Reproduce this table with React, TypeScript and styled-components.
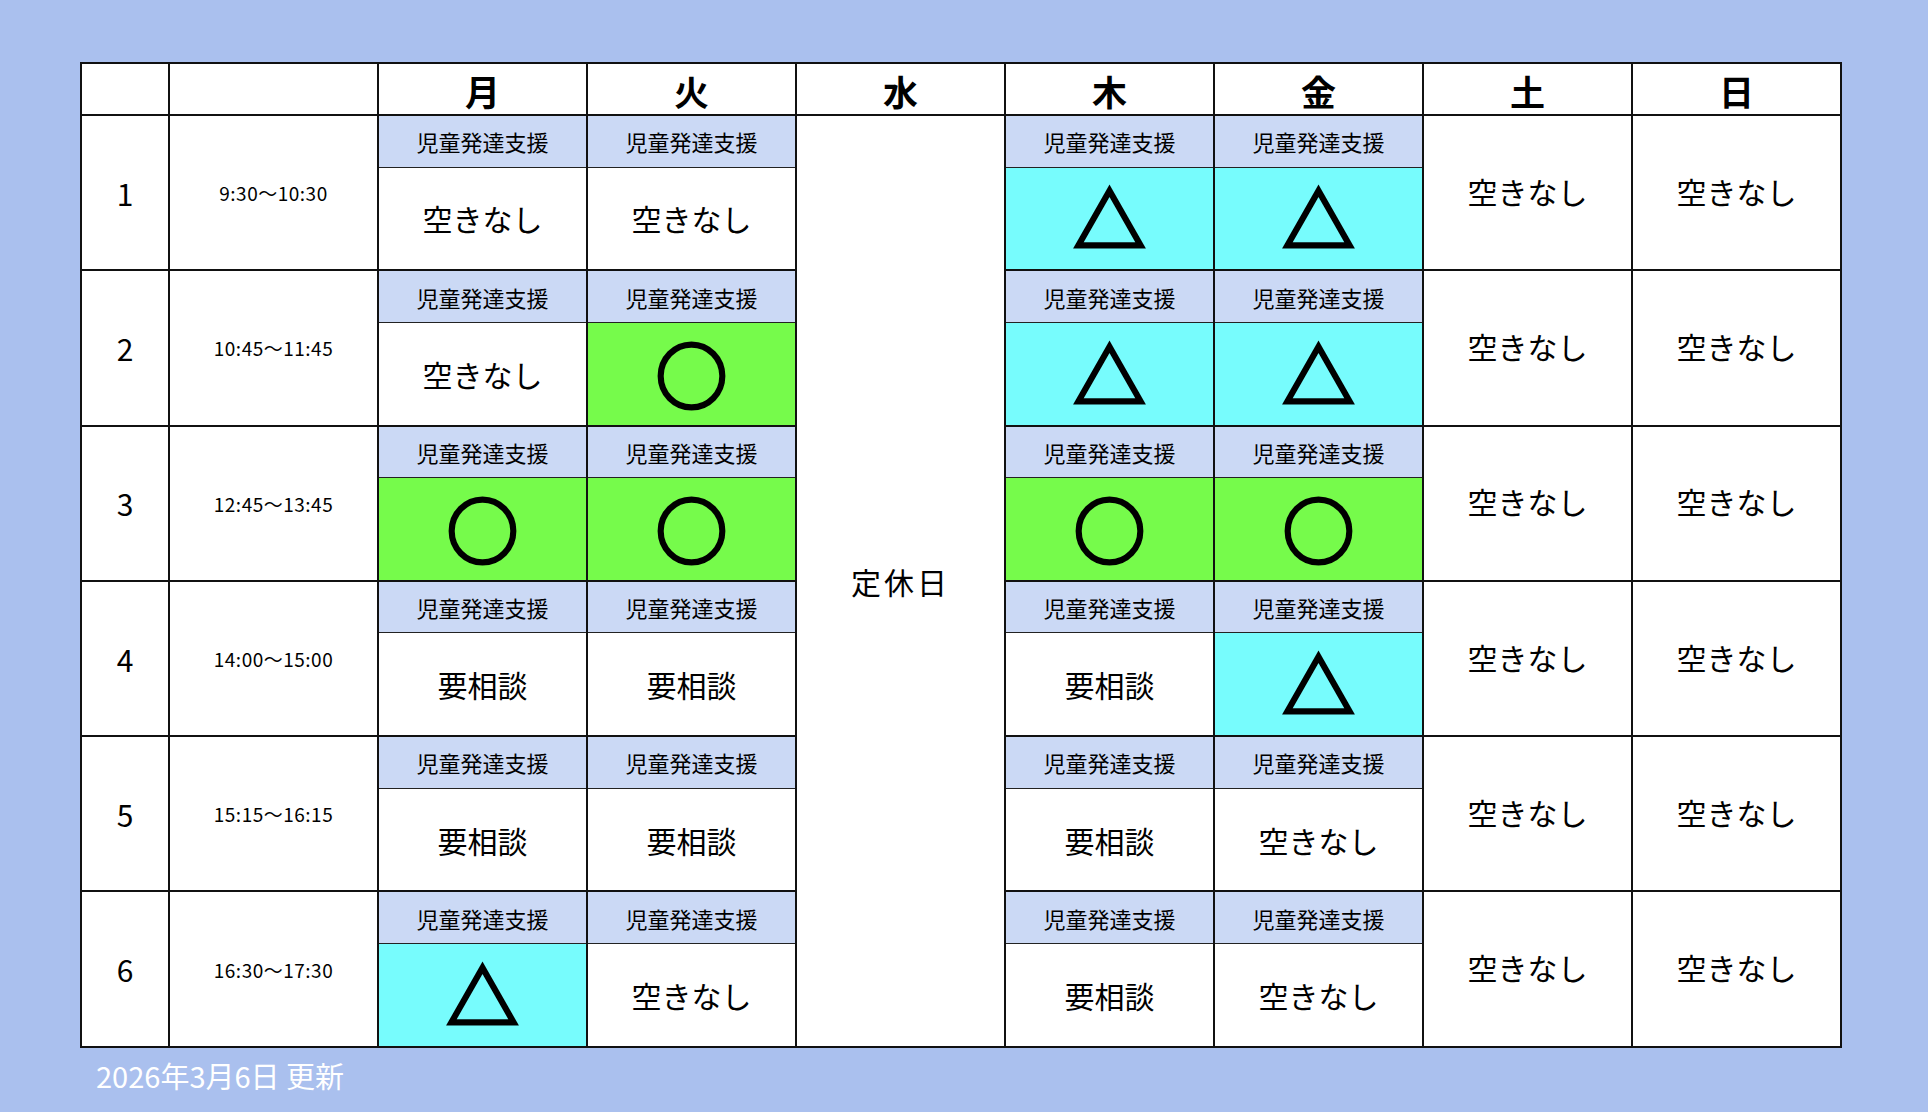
import React from 'react';
import styled, { createGlobalStyle } from 'styled-components';

const GlobalStyle = createGlobalStyle`
  html, body {
    margin: 0;
    overflow: hidden;
  }
  body {
    background: #aac0ee;
    font-family: "Noto Sans CJK JP", "Noto Sans", sans-serif;
  }
`;

const Page = styled.div`
  box-sizing: border-box;
  height: 1112px;
  padding: 62px 0 0 80px;
`;

const Table = styled.table`
  border-collapse: collapse;
  table-layout: fixed;
  background: #fff;
  border: 2px solid #111;
  color: #000;
`;

const HeadRow = styled.tr`
  height: 52px;
`;

const LabelRow = styled.tr`
  height: 52px;
`;

const ContentRow = styled.tr`
  height: 103.3px;
`;

const HeadCell = styled.th`
  border: 2px solid #111;
  padding: 2px 0 0;
  font-size: 35px;
  font-weight: 700;
  line-height: 1;
  text-align: center;
  vertical-align: middle;
`;

const NumCell = styled.td`
  border: 2px solid #111;
  padding: 0;
  font-size: 30px;
  text-align: center;
  vertical-align: middle;
`;

const TimeCell = styled.td`
  border: 2px solid #111;
  padding: 0;
  font-size: 19px;
  letter-spacing: 0.5px;
  text-align: center;
  vertical-align: middle;
`;

const LabelCell = styled.td`
  border-left: 2px solid #111;
  border-right: 2px solid #111;
  border-top: 2px solid #111;
  border-bottom: 1px solid #222;
  padding: 0;
  background: #cbd9f5;
  font-size: 22px;
  text-align: center;
  vertical-align: middle;
  white-space: nowrap;
`;

const colors = {
  ok: '#76fb4b',
  few: '#77fcfd',
  none: '#ffffff',
};

const SlotCell = styled.td<{ $tone: keyof typeof colors }>`
  border-left: 2px solid #111;
  border-right: 2px solid #111;
  border-bottom: 2px solid #111;
  padding: 0;
  background: ${({ $tone }) => colors[$tone]};
  font-size: 30px;
  text-align: center;
  vertical-align: middle;
  white-space: nowrap;
`;

const ClosedCell = styled.td`
  border: 2px solid #111;
  padding: 0;
  font-size: 30px;
  letter-spacing: 3px;
  text-align: center;
  vertical-align: middle;
`;

const OffCell = styled.td`
  border: 2px solid #111;
  padding: 0 0 4px;
  font-size: 30px;
  text-align: center;
  vertical-align: middle;
`;

const Mark = styled.span`
  display: inline-block;
  font-size: 72px;
  font-weight: 700;
  line-height: 1;
  -webkit-text-stroke: 3px #000;
`;

const Updated = styled.div`
  margin: 10px 0 0 16px;
  color: #ffffff;
  font-size: 29px;
  line-height: 1.2;
`;

const days = ['月', '火', '水', '木', '金', '土', '日'];

const slots = [
  { time: '9:30〜10:30', mon: '空きなし', tue: '空きなし', thu: '△', fri: '△' },
  { time: '10:45〜11:45', mon: '空きなし', tue: '○', thu: '△', fri: '△' },
  { time: '12:45〜13:45', mon: '○', tue: '○', thu: '○', fri: '○' },
  { time: '14:00〜15:00', mon: '要相談', tue: '要相談', thu: '要相談', fri: '△' },
  { time: '15:15〜16:15', mon: '要相談', tue: '要相談', thu: '要相談', fri: '空きなし' },
  { time: '16:30〜17:30', mon: '△', tue: '空きなし', thu: '要相談', fri: '空きなし' },
];

const Slot = ({ value }: { value: string }) => {
  if (value === '○') return <SlotCell $tone="ok"><Mark>○</Mark></SlotCell>;
  if (value === '△') return <SlotCell $tone="few"><Mark>△</Mark></SlotCell>;
  return <SlotCell $tone="none">{value}</SlotCell>;
};

const App = () => {
  return (
    <>
      <GlobalStyle />
      <Page>
        <Table>
          <colgroup>
            <col style={{ width: 88 }} />
            <col style={{ width: 209 }} />
            {days.map((d) => (
              <col key={d} style={{ width: 209 }} />
            ))}
          </colgroup>
          <thead>
            <HeadRow>
              <HeadCell />
              <HeadCell />
              {days.map((d) => (
                <HeadCell key={d}>{d}</HeadCell>
              ))}
            </HeadRow>
          </thead>
          <tbody>
            {slots.map((s, i) => (
              <React.Fragment key={s.time}>
                <LabelRow>
                  <NumCell rowSpan={2}>{i + 1}</NumCell>
                  <TimeCell rowSpan={2}>{s.time}</TimeCell>
                  <LabelCell>児童発達支援</LabelCell>
                  <LabelCell>児童発達支援</LabelCell>
                  {i === 0 && <ClosedCell rowSpan={12}>定休日</ClosedCell>}
                  <LabelCell>児童発達支援</LabelCell>
                  <LabelCell>児童発達支援</LabelCell>
                  <OffCell rowSpan={2}>空きなし</OffCell>
                  <OffCell rowSpan={2}>空きなし</OffCell>
                </LabelRow>
                <ContentRow>
                  <Slot value={s.mon} />
                  <Slot value={s.tue} />
                  <Slot value={s.thu} />
                  <Slot value={s.fri} />
                </ContentRow>
              </React.Fragment>
            ))}
          </tbody>
        </Table>
        <Updated>2026年3月6日 更新</Updated>
      </Page>
    </>
  );
};

export default App;
